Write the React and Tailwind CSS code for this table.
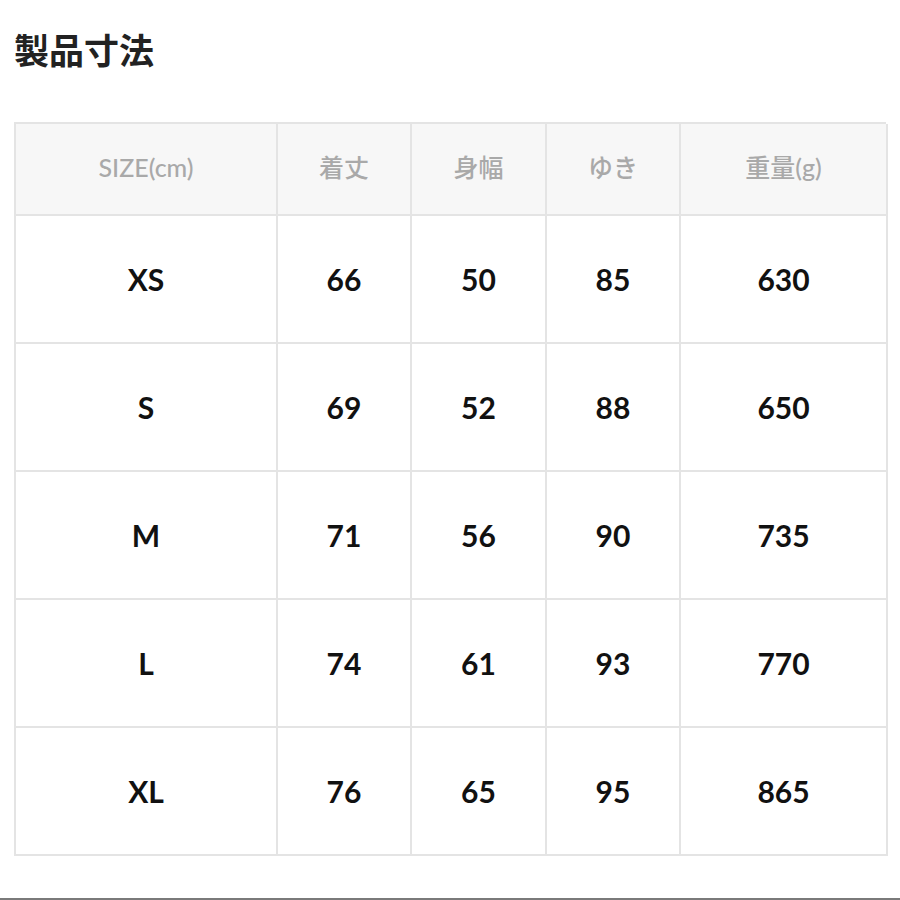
const columns = ["SIZE(cm)", "着丈", "身幅", "ゆき", "重量(g)"];

const rows = [
  ["XS", "66", "50", "85", "630"],
  ["S", "69", "52", "88", "650"],
  ["M", "71", "56", "90", "735"],
  ["L", "74", "61", "93", "770"],
  ["XL", "76", "65", "95", "865"],
];

const font = { fontFamily: 'Lato, "Noto Sans CJK JP", sans-serif' };

export default function App() {
  return (
    <div className="w-[900px] h-[900px] bg-white relative overflow-hidden" style={font}>
      <div className="pl-[14px] pt-[26px]">
        <h1
          className="text-[35px] leading-[46px] font-bold text-[#222]"
          style={{ fontFamily: '"Noto Sans CJK JP", sans-serif' }}
        >
          製品寸法
        </h1>
      </div>

      <div className="ml-[14px] mt-[50px] w-[872px] grid grid-cols-[262px_134px_135px_134px_207px] border-l-2 border-t-2 border-[#e4e4e4]">
        {columns.map((c) => (
          <div
            key={c}
            className="h-[92px] pb-[3px] flex items-center justify-center bg-[#f7f7f7] border-r-2 border-b-2 border-[#e4e4e4] text-[25px] font-medium text-[#a9a9a9]"
          >
            {c}
          </div>
        ))}
        {rows.map((r) =>
          r.map((v, i) => (
            <div
              key={r[0] + i}
              className="h-[128px] flex items-center justify-center border-r-2 border-b-2 border-[#e4e4e4] text-[30px] font-bold text-[#111]"
            >
              {v}
            </div>
          ))
        )}
      </div>

      <div className="absolute left-0 right-0 bottom-0 h-[2px] bg-[#7a7a7a]" />
    </div>
  );
}
